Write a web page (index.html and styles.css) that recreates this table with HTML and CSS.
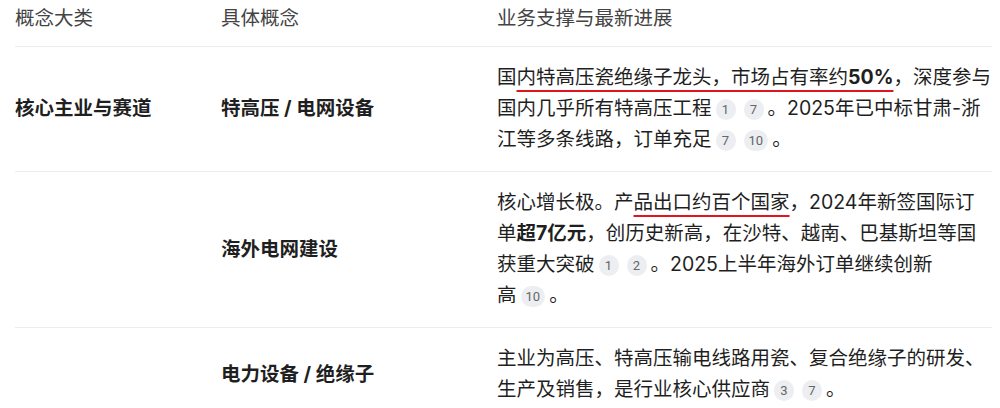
FILE: index.html
```html
<!DOCTYPE html>
<html lang="zh-CN">
<head>
    <meta charset="UTF-8">
    <meta name="viewport" content="width=device-width, initial-scale=1.0">
    <title>业务概念</title>
    <link rel="stylesheet" href="styles.css">
</head>
<body>
    <table class="concepts">
        <thead>
            <tr>
                <th class="col-cat">概念大类</th>
                <th class="col-name">具体概念</th>
                <th class="col-desc">业务支撑与最新进展</th>
            </tr>
        </thead>
        <tbody>
            <tr>
                <td class="label">核心主业与赛道</td>
                <td class="label">特高压 / 电网设备</td>
                <td>国<span class="mark">内特高压瓷绝缘子龙头，市场占有率约<b>50%</b></span>，深度参与国内几乎所有特高压工程<span class="cite">1</span><span class="cite">7</span>。2025年已中标甘肃-浙江等多条线路，订单充足<span class="cite">7</span><span class="cite">10</span>。</td>
            </tr>
            <tr>
                <td></td>
                <td class="label">海外电网建设</td>
                <td>核心增长极。产<span class="mark">品出口约百个国家</span>，2024年新签国际订单<b>超7亿元</b>，创历史新高，在沙特、越南、巴基斯坦等国获重大突破<span class="cite">1</span><span class="cite">2</span>。2025上半年海外订单继续创新<span class="keep">高<span class="cite">10</span>。</span></td>
            </tr>
            <tr>
                <td></td>
                <td class="label">电力设备 / 绝缘子</td>
                <td>主业为高压、特高压输电线路用瓷、复合绝缘子的研发、生产及销售，是行业核心供应商<span class="cite">3</span><span class="cite">7</span>。</td>
            </tr>
        </tbody>
    </table>
</body>
</html>
```

FILE: styles.css
```css
body {margin: 0; background: #fff; color: #1f1f1f; font-family: Inter, "Noto Sans CJK SC", sans-serif; font-size: 19.5px;}
.concepts {margin-left: 15px; width: 977px; border-collapse: collapse; table-layout: fixed;}
.col-cat {width: 206px;}
.col-name {width: 276px;}
.col-desc {width: 495px;}
th, td {padding: 15px 0 16px; line-height: 31px; text-align: left; border-bottom: 1px solid #ececec;}
th {padding: 3px 0 12px; font-weight: normal; color: #444;}
tbody tr:last-child td {border-bottom: none;}
td {vertical-align: top;}
td.label {vertical-align: middle; font-weight: bold;}
b {font-weight: bold;}
.mark {text-decoration: underline; text-decoration-color: #e0161e; text-decoration-thickness: 2px; text-underline-offset: 6px;}
.keep {white-space: nowrap;}
.cite {display: inline-block; min-width: 20px; height: 21px; padding: 0 5px; box-sizing: border-box; margin: 0 4px; border-radius: 11px; background: #eceef1; color: #666; font-family: Roboto, "Noto Sans", sans-serif; font-size: 13px; line-height: 21px; text-align: center; vertical-align: 1px;}
```
